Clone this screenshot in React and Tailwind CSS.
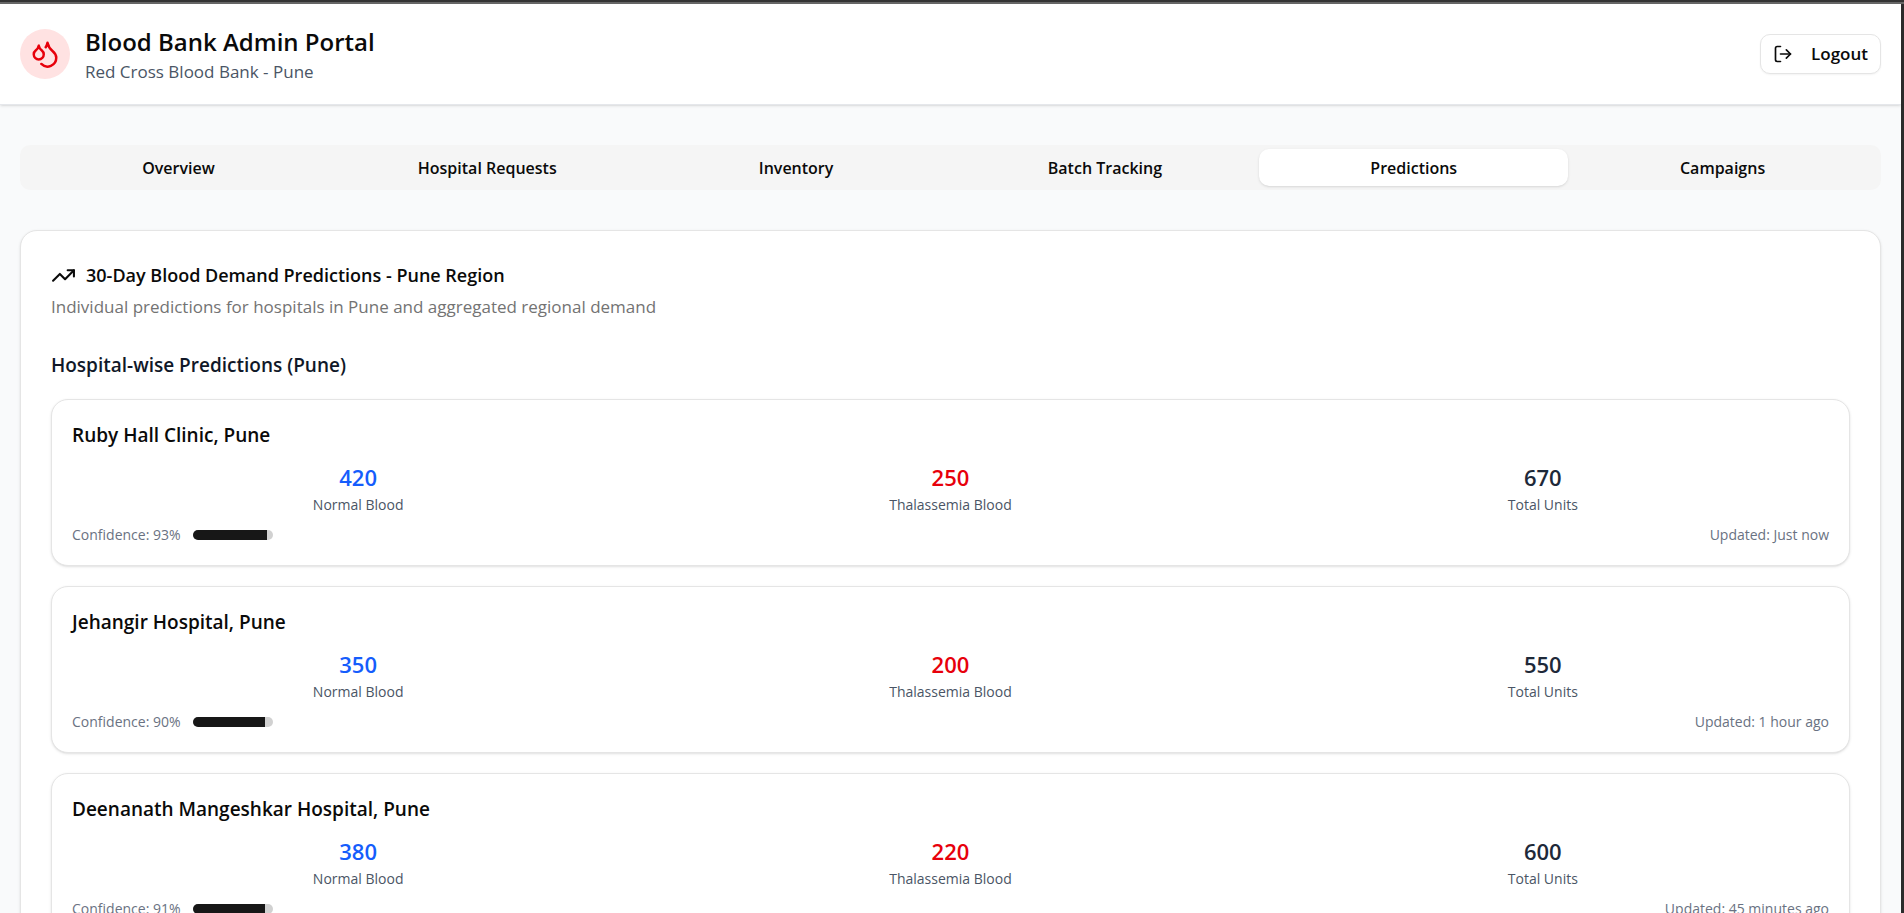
import React, { useState } from 'react'
import { Droplets, LogOut, TrendingUp } from 'lucide-react'

const TABS = [
  'Overview',
  'Hospital Requests',
  'Inventory',
  'Batch Tracking',
  'Predictions',
  'Campaigns'
]

const PREDICTIONS = [
  { hospital: 'Ruby Hall Clinic, Pune', normal: 420, thalassemia: 250, confidence: 93, updated: 'Just now' },
  { hospital: 'Jehangir Hospital, Pune', normal: 350, thalassemia: 200, confidence: 90, updated: '1 hour ago' },
  { hospital: 'Deenanath Mangeshkar Hospital, Pune', normal: 380, thalassemia: 220, confidence: 91, updated: '45 minutes ago' }
]

const Header = () => (
  <header className="flex items-center justify-between border-b border-gray-200 bg-white p-5 shadow-sm">
    <div className="flex items-center gap-[15px]">
      <div className="flex size-[50px] items-center justify-center rounded-full bg-[#ffe2e2]">
        <Droplets className="size-[30px] text-[#e7000b]" />
      </div>
      <div>
        <h1 className="text-[24px] leading-[35px] font-semibold">Blood Bank Admin Portal</h1>
        <p className="text-[17px] leading-[25px] text-[#4a5565]">Red Cross Blood Bank - Pune</p>
      </div>
    </div>
    <button
      type="button"
      className="flex h-10 items-center gap-[18px] rounded-[10px] border border-[#e5e5e5] bg-white px-3 text-[17px] font-semibold shadow-xs"
    >
      <LogOut className="size-5" />
      Logout
    </button>
  </header>
)

const Stat = ({ value, label, color }) => (
  <div className="text-center">
    <div className={`text-[22px] leading-[35px] font-semibold ${color}`}>{value}</div>
    <div className="text-[14px] leading-5 text-[#4a5565]">{label}</div>
  </div>
)

const PredictionCard = ({ hospital, normal, thalassemia, confidence, updated }) => (
  <article className="flex flex-col gap-[10px] rounded-[17px] border border-[#e5e5e5] bg-white p-5 shadow-sm">
    <h4 className="text-[19px] leading-[30px] font-semibold">{hospital}</h4>
    <div className="grid grid-cols-3 gap-5">
      <Stat value={normal} label="Normal Blood" color="text-[#155dfc]" />
      <Stat value={thalassemia} label="Thalassemia Blood" color="text-[#e7000b]" />
      <Stat value={normal + thalassemia} label="Total Units" color="text-[#1e2939]" />
    </div>
    <div className="flex items-center justify-between text-[14px] leading-5 text-[#6a7282]">
      <div className="flex items-center gap-3">
        <span>Confidence: {confidence}%</span>
        <div
          role="progressbar"
          aria-label={`${hospital} confidence`}
          aria-valuenow={confidence}
          className="h-[10px] w-20 overflow-hidden rounded-full bg-[#d1d1d1]"
        >
          <div className="h-full bg-[#171717]" style={{ width: `${confidence}%` }} />
        </div>
      </div>
      <span>Updated: {updated}</span>
    </div>
  </article>
)

const App = () => {
  const [activeTab, setActiveTab] = useState('Predictions')

  return (
    <div className="flex h-screen flex-col overflow-hidden border-t-2 border-[#333333] bg-[#2b2b2b] font-['Open_Sans','Noto_Sans',sans-serif] text-[#0a0a0a]">
      <div className="h-[2px] shrink-0 bg-[#666666]" />
      <div className="mr-[3px] min-h-0 flex-1 overflow-y-auto bg-gray-50 [scrollbar-width:none]">
        <Header />
        <main className="px-5 py-10">
          <div role="tablist" className="grid grid-cols-6 rounded-[10px] bg-[#f5f5f5] p-1">
            {TABS.map((tab) => (
              <button
                key={tab}
                type="button"
                role="tab"
                aria-selected={tab === activeTab}
                onClick={() => setActiveTab(tab)}
                className={`h-[37px] rounded-[10px] text-[16px] font-semibold ${tab === activeTab ? 'bg-white shadow-sm' : ''}`}
              >
                {tab}
              </button>
            ))}
          </div>

          {/* Demand forecast for the region */}
          <section className="mt-10 rounded-[17px] border border-[#e5e5e5] bg-white p-[30px] shadow-sm">
            <h2 className="flex items-center gap-[10px] text-[18px] leading-[28px] font-semibold">
              <TrendingUp className="size-[25px]" />
              30-Day Blood Demand Predictions - Pune Region
            </h2>
            <p className="mt-[5px] text-[17px] leading-[25px] text-[#737373]">
              Individual predictions for hospitals in Pune and aggregated regional demand
            </p>
            <h3 className="mt-8 text-[19px] leading-[28px] font-semibold text-[#101828]">
              Hospital-wise Predictions (Pune)
            </h3>
            <div className="mt-5 flex flex-col gap-5">
              {PREDICTIONS.map((prediction) => (
                <PredictionCard key={prediction.hospital} {...prediction} />
              ))}
            </div>
          </section>
        </main>
      </div>
    </div>
  )
}

export default App
